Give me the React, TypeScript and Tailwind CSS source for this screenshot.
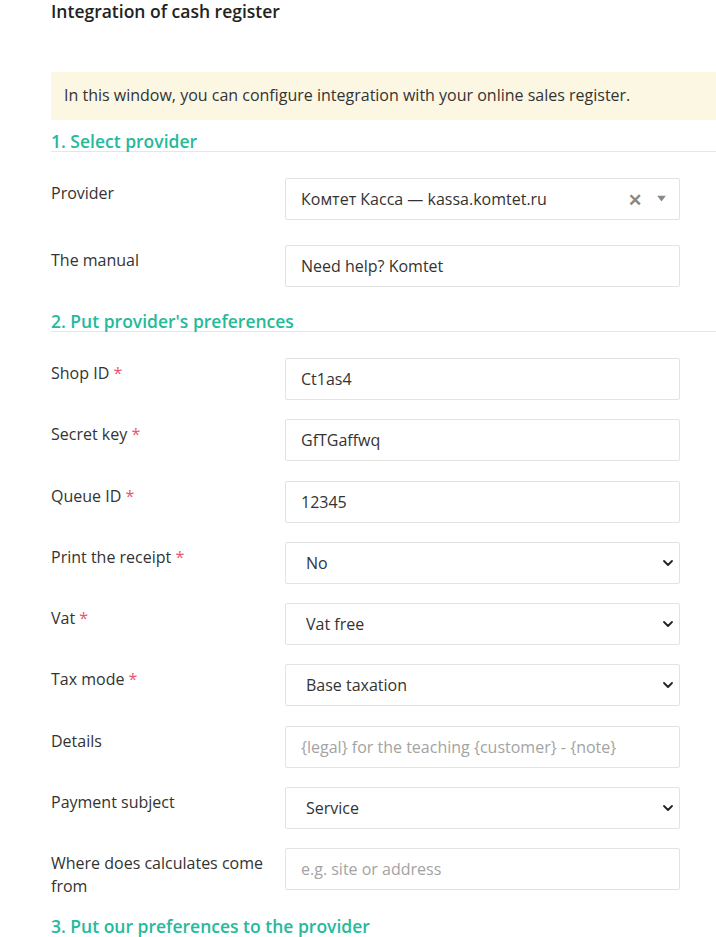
import { ReactNode } from "react"

const inputCls =
  "w-full h-[42px] border border-[#e3e3e3] rounded-[2px] bg-white px-[15px] text-[16px] text-[#333] placeholder:text-[#a3a3a3] outline-none"

function Label({ text, required }: { text: string; required?: boolean }) {
  return (
    <div className="pt-[4px] pr-3 text-[16px] leading-[23px] text-[#333]">
      {text}
      {required && <span className="text-[#e8546a]"> *</span>}
    </div>
  )
}

function Row({ label, required, children, className = "" }: { label: string; required?: boolean; children: ReactNode; className?: string }) {
  return (
    <div className={"grid grid-cols-[234px_395px] " + className}>
      <Label text={label} required={required} />
      <div>{children}</div>
    </div>
  )
}

function Select({ value }: { value: string }) {
  return (
    <div className="relative">
      <select
        defaultValue={value}
        className="w-full h-[42px] appearance-none border border-[#e3e3e3] rounded-[2px] bg-white pl-[20px] pr-8 text-[16px] text-[#333] outline-none"
      >
        <option>{value}</option>
      </select>
      <svg className="pointer-events-none absolute right-[5px] top-1/2 -translate-y-1/2" width="14" height="14" viewBox="0 0 14 14">
        <path d="M3 5l4 4 4-4" fill="none" stroke="#222" strokeWidth="1.8" strokeLinecap="round" strokeLinejoin="round" />
      </svg>
    </div>
  )
}

function Section({ title, className = "" }: { title: string; className?: string }) {
  return (
    <div className={"border-b border-[#e6e6e6] text-[17.5px] leading-[20px] font-semibold text-[#26b99a] " + className}>
      {title}
    </div>
  )
}

export default function App() {
  return (
    <div className="min-h-screen w-[716px] overflow-hidden bg-white font-['Open_Sans',sans-serif]">
      <div className="ml-[51px] w-[700px]">
        <h1 className="pt-[1px] text-[17.5px] leading-[20px] font-semibold text-[#222]">Integration of cash register</h1>

        <div className="mt-[51px] h-[48px] flex items-center bg-[#fcf7e3] px-[13px] pb-[2px] text-[16px] text-[#333]">
          In this window, you can configure integration with your online sales register.
        </div>

        <Section title="1. Select provider" className="mt-[11px]" />

        <Row label="Provider" className="mt-[26px]">
          <div className="relative h-[42px] border border-[#e3e3e3] rounded-[2px] bg-white flex items-center pl-[15px] text-[16px] text-[#333]">
            Комтет Касса — kassa.komtet.ru
            <span className="absolute right-[37px] top-1/2 -translate-y-1/2 text-[#888] text-[17px] font-bold leading-none">✕</span>
            <svg className="absolute right-[13px] top-1/2 -translate-y-[60%]" width="9" height="6" viewBox="0 0 9 6">
              <path d="M0 0h9L4.5 6z" fill="#888" />
            </svg>
          </div>
        </Row>

        <Row label="The manual" className="mt-[25px]">
          <input className={inputCls} defaultValue="Need help? Komtet" />
        </Row>

        <Section title="2. Put provider's preferences" className="mt-[24px]" />

        <div className="mt-[26px] flex flex-col gap-[19.25px]">
          <Row label="Shop ID" required>
            <input className={inputCls} defaultValue="Ct1as4" />
          </Row>
          <Row label="Secret key" required>
            <input className={inputCls} defaultValue="GfTGaffwq" />
          </Row>
          <Row label="Queue ID" required>
            <input className={inputCls} defaultValue="12345" />
          </Row>
          <Row label="Print the receipt" required>
            <Select value="No" />
          </Row>
          <Row label="Vat" required>
            <Select value="Vat free" />
          </Row>
          <Row label="Tax mode" required>
            <Select value="Base taxation" />
          </Row>
          <Row label="Details">
            <input className={inputCls} placeholder="{legal} for the teaching {customer} - {note}" />
          </Row>
          <Row label="Payment subject">
            <Select value="Service" />
          </Row>
          <Row label="Where does calculates come from">
            <input className={inputCls} placeholder="e.g. site or address" />
          </Row>
        </div>

        <div className="mt-[18px] text-[17.5px] leading-[20px] font-semibold text-[#26b99a]">
          3. Put our preferences to the provider
        </div>
      </div>
    </div>
  )
}
